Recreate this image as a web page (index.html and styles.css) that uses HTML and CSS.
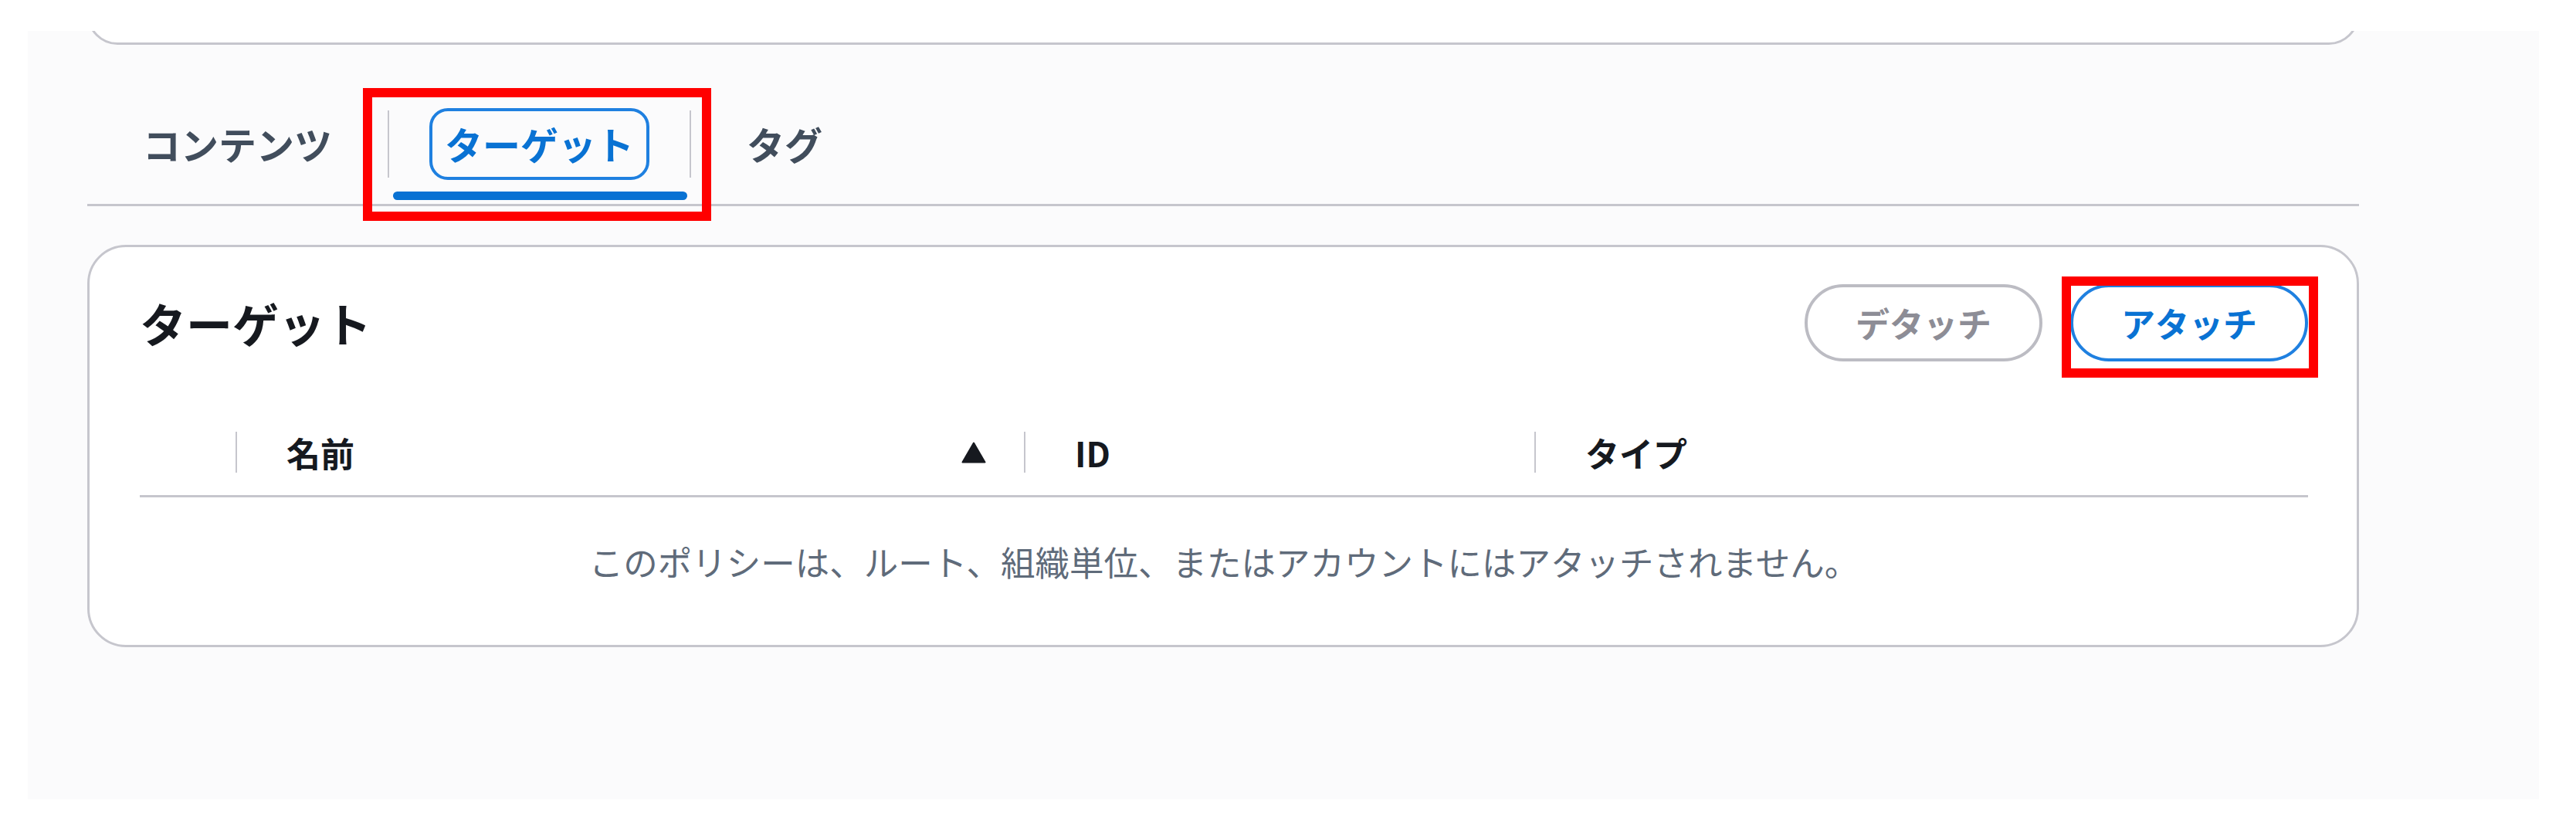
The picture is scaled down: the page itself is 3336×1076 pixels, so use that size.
FILE: index.html
```html
<!DOCTYPE html>
<html lang="ja">
<head>
<meta charset="utf-8">
<title>ターゲット</title>
<link rel="stylesheet" href="styles.css">
</head>
<body>
<div class="page">
  <div class="content">
    <div class="prev-card"></div>

    <div class="tabs">
      <div class="tab">
        <span class="tab-label">コンテンツ</span>
        <span class="tab-bar"></span>
      </div>
      <span class="tab-sep"></span>
      <div class="tab tab-active annotated-tab">
        <span class="tab-label">ターゲット</span>
        <span class="tab-bar"></span>
      </div>
      <span class="tab-sep"></span>
      <div class="tab">
        <span class="tab-label">タグ</span>
        <span class="tab-bar"></span>
      </div>
    </div>

    <section class="card">
      <header class="card-header">
        <h2 class="card-title">ターゲット</h2>
        <div class="actions">
          <button class="btn btn-disabled" type="button">デタッチ</button>
          <span class="annotated-btn"><button class="btn btn-normal" type="button">アタッチ</button></span>
        </div>
      </header>

      <div class="table">
        <div class="thead">
          <div class="th th-select"></div>
          <div class="th">
            <span class="th-sep"></span>
            <span class="th-label">名前</span>
            <svg class="sort-icon" viewBox="0 0 32 28" width="32" height="28" aria-hidden="true">
              <path d="M16 1.5 L30.5 26.5 L1.5 26.5 Z" fill="#16191f" stroke="#16191f" stroke-width="2" stroke-linejoin="round"/>
            </svg>
          </div>
          <div class="th">
            <span class="th-sep"></span>
            <span class="th-label">ID</span>
          </div>
          <div class="th">
            <span class="th-sep"></span>
            <span class="th-label">タイプ</span>
          </div>
        </div>
        <div class="empty">このポリシーは、ルート、組織単位、またはアカウントにはアタッチされません。</div>
      </div>
    </section>
  </div>
</div>
</body>
</html>
```

FILE: styles.css
```css
html, body {
  margin: 0;
  padding: 0;
  background: #ffffff;
}

body {
  font-family: "Noto Sans CJK JP", "Noto Sans", "Liberation Sans", sans-serif;
  color: #16191f;
}

.page {
  margin: 40px 0 0 36px;
  width: 3252px;
  height: 995px;
  background: #fbfbfc;
  overflow: hidden;
}

.content {
  margin-left: 77px;
  width: 2942px;
}

.prev-card {
  box-sizing: border-box;
  height: 78px;
  margin-top: -60px;
  background: #ffffff;
  border: 3px solid #c6c6cd;
  border-radius: 50px;
}

/* Tabs */
.tabs {
  margin-top: 82px;
  display: flex;
  align-items: flex-start;
  border-bottom: 3px solid #c6c6cd;
}

.tab {
  display: flex;
  flex-direction: column;
  align-items: center;
  padding: 0 52px;
  position: relative;
}

.tab-label {
  box-sizing: border-box;
  height: 93px;
  line-height: 83px;
  padding: 0 16px 2px;
  border: 4px solid transparent;
  border-radius: 24px;
  font-size: 49px;
  font-weight: 700;
  color: #414d5c;
  white-space: nowrap;
}

.tab-bar {
  align-self: stretch;
  height: 11px;
  margin: 15px -49px 5px -47px;
  border-radius: 6px;
  background: transparent;
}

.tab-active .tab-label {
  color: #0972d3;
  border-color: #1f80e0;
}

.tab-active .tab-bar {
  background: #0972d3;
}

.tab-sep {
  width: 2px;
  height: 87px;
  margin-top: 3px;
  background: #c6c6cd;
}

/* red annotation around the active tab */
.annotated-tab::after {
  content: "";
  position: absolute;
  top: -26px;
  left: -34px;
  right: -28px;
  bottom: -22px;
  border: 12px solid #ff0000;
  pointer-events: none;
}

/* Card */
.card {
  margin-top: 50px;
  background: #ffffff;
  border: 3px solid #c6c6cd;
  border-radius: 50px;
  padding: 48px 63px 78px 65px;
}

.card-header {
  display: flex;
  align-items: center;
  justify-content: space-between;
  height: 100px;
}

.card-title {
  margin: 0;
  font-size: 60px;
  font-weight: 700;
  line-height: 1.2;
  color: #16191f;
}

.actions {
  display: flex;
  align-items: center;
  gap: 36px;
}

.btn {
  box-sizing: border-box;
  height: 100px;
  padding: 0 62px;
  border-radius: 50px;
  border: 4px solid;
  background: #ffffff;
  font-family: inherit;
  font-size: 44px;
  font-weight: 700;
  line-height: 1;
  white-space: nowrap;
}

.btn-disabled {
  border-color: #bcbcc3;
  color: #8d8d96;
}

.btn-normal {
  border-color: #1f80e0;
  color: #0972d3;
}

.annotated-btn {
  position: relative;
  display: flex;
}

.annotated-btn::after {
  content: "";
  position: absolute;
  top: -10px;
  left: -11px;
  right: -13px;
  bottom: -21px;
  border: 12px solid #ff0000;
  pointer-events: none;
}

/* Table */
.table {
  margin-top: 62px;
}

.thead {
  display: grid;
  grid-template-columns: 124px 1021px 661px 1fr;
  height: 111px;
  border-bottom: 3px solid #c6c6cd;
}

.th {
  display: flex;
  align-items: center;
}

.th-sep {
  width: 2px;
  height: 53px;
  margin-right: 64px;
  background: #c6c6cd;
}

.th-label {
  font-size: 44px;
  font-weight: 700;
  line-height: 1;
  color: #16191f;
}

.sort-icon {
  margin-left: auto;
  margin-right: 49px;
  display: block;
}

.empty {
  padding-top: 53px;
  line-height: 60px;
  font-size: 44.5px;
  text-align: center;
  color: #5f6b7a;
}
```
